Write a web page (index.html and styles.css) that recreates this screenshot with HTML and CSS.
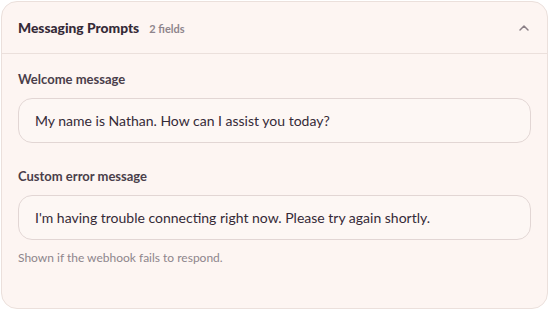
FILE: index.html
```html
<!DOCTYPE html>
<html>
<head>
<meta charset="utf-8">
<link rel="stylesheet" href="styles.css">
</head>
<body>
<section class="card">
  <header class="card-head">
    <div class="head-title">
      <h2 class="title">Messaging Prompts</h2>
      <span class="count">2 fields</span>
    </div>
    <svg class="chev" width="12" height="8" viewBox="0 0 12 8"><path d="M2 6 L6 2 L10 6" fill="none" stroke="#8a7f86" stroke-width="1.5" stroke-linecap="round" stroke-linejoin="round"/></svg>
  </header>
  <div class="card-body">
    <div class="field">
      <label class="label">Welcome message</label>
      <div class="input">My name is Nathan. How can I assist you today?</div>
    </div>
    <div class="field">
      <label class="label">Custom error message</label>
      <div class="input">I'm having trouble connecting right now. Please try again shortly.</div>
      <p class="hint">Shown if the webhook fails to respond.</p>
    </div>
  </div>
</section>
</body>
</html>
```
FILE: styles.css
```css
* { box-sizing: border-box; }
html, body { margin: 0; background: #ffffff; }
body {
  padding: 1px 2px 0 1px;
  font-family: "Lato", "Noto Sans", sans-serif;
  color: #3a2e3b;
}
.card {
  width: 547px;
  height: 308px;
  background: #fdf5f2;
  border: 1px solid #ebe0dc;
  border-radius: 16px;
  overflow: hidden;
}
.card-head {
  height: 52px;
  border-bottom: 1px solid #ebe0dc;
  display: flex;
  align-items: center;
  justify-content: space-between;
  padding: 0 17px 0 16px;
}
.head-title { display: flex; align-items: baseline; gap: 10px; }
.title {
  margin: 0;
  font-size: 13.8px;
  font-weight: 900;
  color: #352a37;
}
.count {
  font-size: 11px;
  font-weight: 700;
  color: #8e858c;
}
.chev { display: block; }
.card-body { padding: 17px 16px 0 16px; }
.field { display: flex; flex-direction: column; }
.field + .field { margin-top: 25px; }
.label {
  font-size: 13px;
  font-weight: 700;
  line-height: 16px;
  color: #4a3e4a;
  margin-bottom: 11px;
}
.input {
  height: 45px;
  border: 1px solid #e2d6d4;
  border-radius: 14px;
  background: #fdf7f4;
  display: flex;
  align-items: center;
  padding: 0 16px;
  font-size: 14px;
  color: #352a37;
}
.hint {
  margin: 10px 0 0;
  font-size: 12px;
  line-height: 16px;
  color: #8e858c;
}
```
